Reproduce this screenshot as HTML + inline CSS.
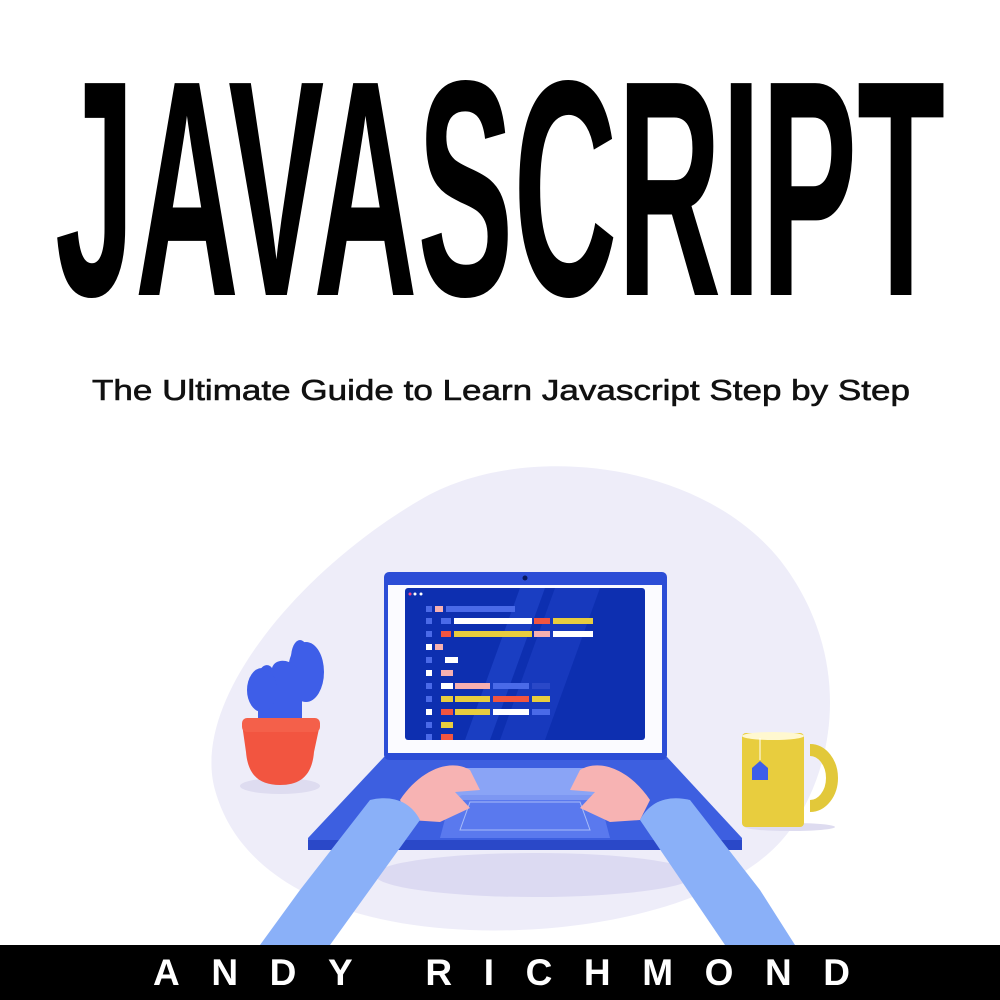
<!DOCTYPE html>
<html><head><meta charset="utf-8"><style>
html,body{margin:0;padding:0;background:#fff;width:1000px;height:1000px;overflow:hidden}
svg{display:block}
</style></head><body>
<svg width="1000" height="1000" viewBox="0 0 1000 1000" xmlns="http://www.w3.org/2000/svg">
<rect width="1000" height="1000" fill="#fff"/>
<text x="55" y="295" font-family="Liberation Sans Narrow, Liberation Sans, sans-serif" font-weight="bold" font-size="308" textLength="890" lengthAdjust="spacingAndGlyphs" fill="#000">JAVASCRIPT</text>
<text x="92" y="400" font-family="Liberation Sans, sans-serif" font-size="29" textLength="818" lengthAdjust="spacingAndGlyphs" fill="#111" stroke="#111" stroke-width="0.6">The Ultimate Guide to Learn Javascript Step by Step</text>
<!-- blob -->
<path d="M420 500 C520 440 700 460 780 560 C850 650 840 760 790 830 C740 900 600 935 470 930 C340 925 240 880 215 790 C190 700 300 570 420 500 Z" fill="#eeedf9"/>
<ellipse cx="535" cy="875" rx="160" ry="22" fill="#dcdaf2"/>
<!-- cactus -->
<ellipse cx="280" cy="786" rx="40" ry="8" fill="#dedcf0"/>
<ellipse cx="306" cy="672" rx="18" ry="30" fill="#3e5ee8"/>
<ellipse cx="300" cy="658" rx="9" ry="18" fill="#3e5ee8"/>
<path d="M258 725 L258 680 C258 665 268 662 272 668 C276 655 300 660 302 680 L302 725 Z" fill="#3e5ee8"/>
<ellipse cx="262" cy="690" rx="15" ry="22" fill="#3e5ee8"/>
<path d="M242 724 L320 724 L314 752 C312 776 300 785 280 785 C260 785 248 776 246 752 Z" fill="#f25540"/>
<rect x="242" y="718" width="78" height="14" rx="5" fill="#f4604a"/>
<!-- mug -->
<ellipse cx="790" cy="827" rx="45" ry="4" fill="#dedcf0"/>
<path d="M810 750 a22 28 0 0 1 0 56" fill="none" stroke="#e2c83a" stroke-width="12"/>
<rect x="742" y="733" width="62" height="94" rx="4" fill="#e8cd3e"/>
<ellipse cx="773" cy="736" rx="31" ry="4" fill="#fff8d0"/>
<line x1="760" y1="738" x2="760" y2="760" stroke="#fff" stroke-width="1"/>
<path d="M752 768 l8 -7 l8 7 v12 h-16 z" fill="#3e5ee8"/>
<!-- laptop base -->
<path d="M384 757 L667 757 L742 838 L742 848 L308 848 L308 838 Z" fill="#3d5fe0"/>
<path d="M308 840 L742 840 L742 850 L308 850 Z" fill="#2a48c8"/>
<path d="M448 768 L605 768 L612 798 L440 798 Z" fill="#8aa4f6"/>
<path d="M450 800 L600 800 L610 838 L440 838 Z" fill="#5a79ee"/>
<!-- screen -->
<rect x="384" y="572" width="283" height="188" rx="5" fill="#2c4dd6"/>
<rect x="388" y="585" width="274" height="168" fill="#fbfbff"/>
<rect x="405" y="588" width="240" height="152" rx="3" fill="#0d2fb0"/>
<polygon points="520,588 545,588 490,740 465,740" fill="#1a3ec2"/>
<polygon points="555,588 600,588 545,740 500,740" fill="#1739bd"/>
<circle cx="525" cy="578" r="2.5" fill="#0a1a60"/>
<g>
<circle cx="410" cy="594" r="1.5" fill="#f48"/><circle cx="415" cy="594" r="1.5" fill="#fff"/><circle cx="421" cy="594" r="1.5" fill="#fff"/>
<rect x="426" y="606" width="6" height="6" fill="#4a6ae8"/><rect x="435" y="606" width="8" height="6" fill="#f7b0b0"/><rect x="446" y="606" width="69" height="6" fill="#4a6ae8"/>
<rect x="426" y="618" width="6" height="6" fill="#4a6ae8"/><rect x="441" y="618" width="10" height="6" fill="#4a6ae8"/><rect x="454" y="618" width="78" height="6" fill="#fff"/><rect x="534" y="618" width="16" height="6" fill="#f25540"/><rect x="553" y="618" width="40" height="6" fill="#e8cd3e"/>
<rect x="426" y="631" width="6" height="6" fill="#4a6ae8"/><rect x="441" y="631" width="10" height="6" fill="#f25540"/><rect x="454" y="631" width="78" height="6" fill="#e8cd3e"/><rect x="534" y="631" width="16" height="6" fill="#f7b0b0"/><rect x="553" y="631" width="40" height="6" fill="#fff"/>
<rect x="426" y="644" width="6" height="6" fill="#fff"/><rect x="435" y="644" width="8" height="6" fill="#f7b0b0"/>
<rect x="426" y="657" width="6" height="6" fill="#4a6ae8"/><rect x="445" y="657" width="13" height="6" fill="#fff"/>
<rect x="426" y="670" width="6" height="6" fill="#fff"/><rect x="441" y="670" width="12" height="6" fill="#f7b0b0"/>
<rect x="426" y="683" width="6" height="6" fill="#4a6ae8"/><rect x="441" y="683" width="12" height="6" fill="#fff"/><rect x="455" y="683" width="35" height="6" fill="#f7b0b0"/><rect x="493" y="683" width="36" height="6" fill="#4a6ae8"/><rect x="532" y="683" width="18" height="6" fill="#2a48c8"/>
<rect x="426" y="696" width="6" height="6" fill="#4a6ae8"/><rect x="441" y="696" width="12" height="6" fill="#e8cd3e"/><rect x="455" y="696" width="35" height="6" fill="#e8cd3e"/><rect x="493" y="696" width="36" height="6" fill="#f25540"/><rect x="532" y="696" width="18" height="6" fill="#e8cd3e"/>
<rect x="426" y="709" width="6" height="6" fill="#fff"/><rect x="441" y="709" width="12" height="6" fill="#f25540"/><rect x="455" y="709" width="35" height="6" fill="#e8cd3e"/><rect x="493" y="709" width="36" height="6" fill="#fff"/><rect x="532" y="709" width="18" height="6" fill="#4a6ae8"/>
<rect x="426" y="722" width="6" height="6" fill="#4a6ae8"/><rect x="441" y="722" width="12" height="6" fill="#e8cd3e"/>
<rect x="426" y="734" width="6" height="6" fill="#4a6ae8"/><rect x="441" y="734" width="12" height="6" fill="#f25540"/>
</g>
<path d="M470 802 L580 802 L590 830 L460 830 Z" fill="none" stroke="#a8bcf8" stroke-width="1"/>
<path d="M462 795 L592 795 L602 800 L452 800 Z" fill="#7d97f2"/>
<!-- hands -->
<path d="M400 800 C420 770 450 758 470 770 L480 790 L455 792 L470 808 L440 822 L410 820 Z" fill="#f7b3b3"/>
<path d="M650 800 C630 770 600 758 580 770 L570 790 L595 792 L580 808 L610 822 L640 820 Z" fill="#f7b3b3"/>
<!-- arms -->
<path d="M260 945 L330 945 L420 820 C410 800 390 795 370 800 L300 890 Z" fill="#8ab0f8"/>
<path d="M795 945 L725 945 L640 820 C650 800 670 795 690 800 L760 890 Z" fill="#8ab0f8"/>
<!-- footer -->
<rect x="0" y="945" width="1000" height="55" fill="#000"/>
<text x="153" y="985" font-family="Liberation Sans, sans-serif" font-weight="bold" font-size="37" textLength="697" lengthAdjust="spacing" fill="#fff">ANDY RICHMOND</text>
</svg>
</body></html>
